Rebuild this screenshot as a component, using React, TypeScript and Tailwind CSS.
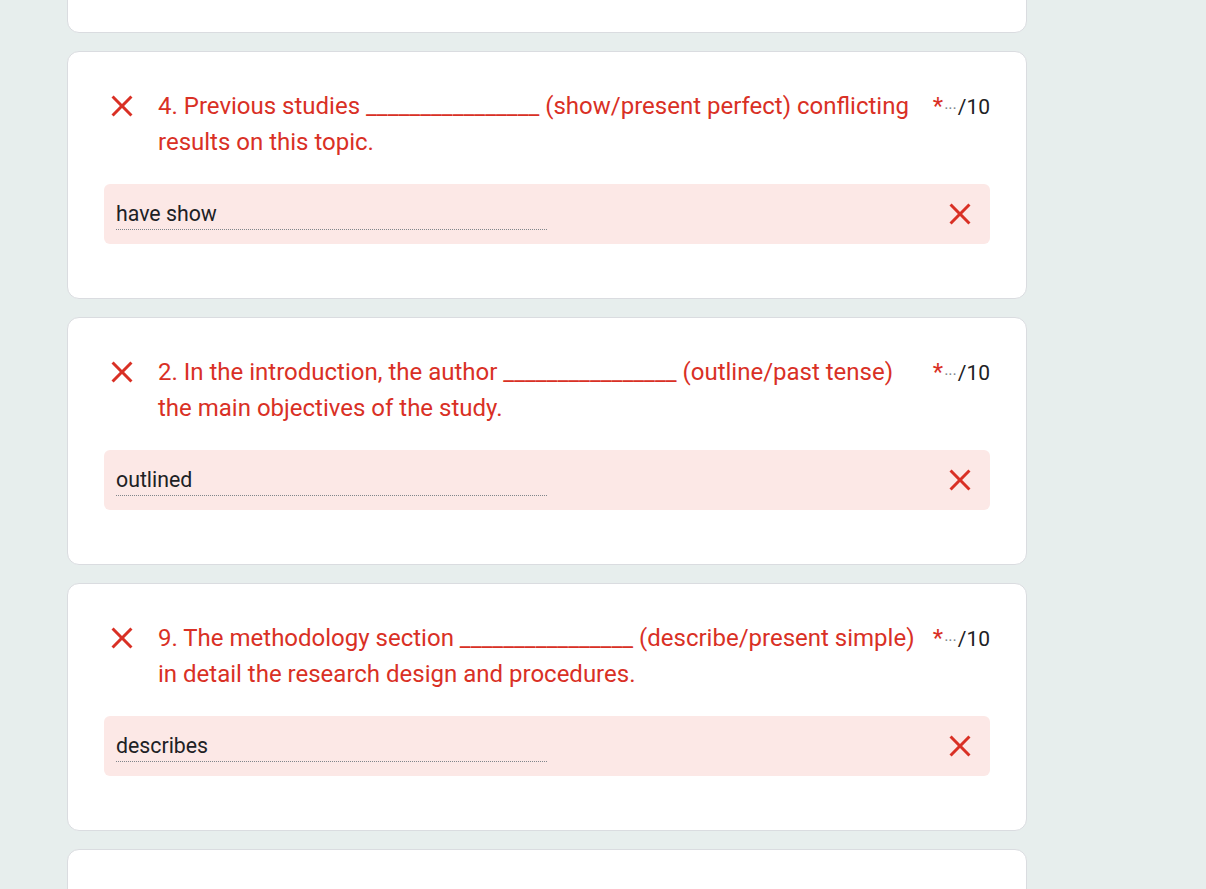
import React from "react";

const CloseIcon = ({ className }: { className?: string }) => (
  <svg viewBox="0 0 24 24" className={className} fill="currentColor">
    <path d="M19 6.41L17.59 5 12 10.59 6.41 5 5 6.41 10.59 12 5 17.59 6.41 19 12 13.41 17.59 19 19 17.59 13.41 12z" />
  </svg>
);

type Q = { before: string; after: string; answer: string };

const questions: Q[] = [
  {
    before: "4. Previous studies",
    after: "(show/present perfect) conflicting results on this topic.",
    answer: "have show",
  },
  {
    before: "2. In the introduction, the author",
    after: "(outline/past tense) the main objectives of the study.",
    answer: "outlined",
  },
  {
    before: "9. The methodology section",
    after: "(describe/present simple) in detail the research design and procedures.",
    answer: "describes",
  },
];

const Card = ({ q }: { q: Q }) => (
  <div className="w-[960px] h-[248px] shrink-0 bg-white border border-[#dadce0] rounded-[12px] px-[36px] pt-[36px]">
    <div className="flex items-start">
      <CloseIcon className="w-[36px] h-[36px] shrink-0 text-[#d93025]" />
      <div className="flex-1 ml-[18px] text-[24px] leading-[36px] text-[#d93025]">
        {q.before} ________________ {q.after}
      </div>
      <div className="flex items-baseline ml-[8px] leading-[36px] whitespace-nowrap">
        <span className="text-[24px] text-[#d93025]">*</span>
        <span className="text-[16px] text-[#80868b] ml-[1px] mr-[1px]">···</span>
        <span className="text-[21px] text-[#202124]">/10</span>
      </div>
    </div>
    <div className="mt-[24px] h-[60px] bg-[#fce8e6] rounded-[6px] flex items-center pl-[12px] pr-[12px]">
      <div className="w-[431px] h-[31px] border-b border-dotted border-[#80868b] text-[21.3px] leading-[30px] text-[#202124]">
        {q.answer}
      </div>
      <div className="flex-1" />
      <CloseIcon className="w-[36px] h-[36px] shrink-0 text-[#d93025]" />
    </div>
  </div>
);

export default function App() {
  return (
    <div
      className="h-[889px] overflow-hidden bg-[#e7eeed] pl-[67px] flex flex-col gap-[18px]"
      style={{ fontFamily: "Roboto, 'Liberation Sans', sans-serif" }}
    >
      <div className="w-[960px] h-[248px] shrink-0 mt-[-215px] bg-white border border-[#dadce0] rounded-[12px]" />
      {questions.map((q, i) => (
        <Card key={i} q={q} />
      ))}
      <div className="w-[960px] h-[248px] shrink-0 bg-white border border-[#dadce0] rounded-[12px]" />
    </div>
  );
}
